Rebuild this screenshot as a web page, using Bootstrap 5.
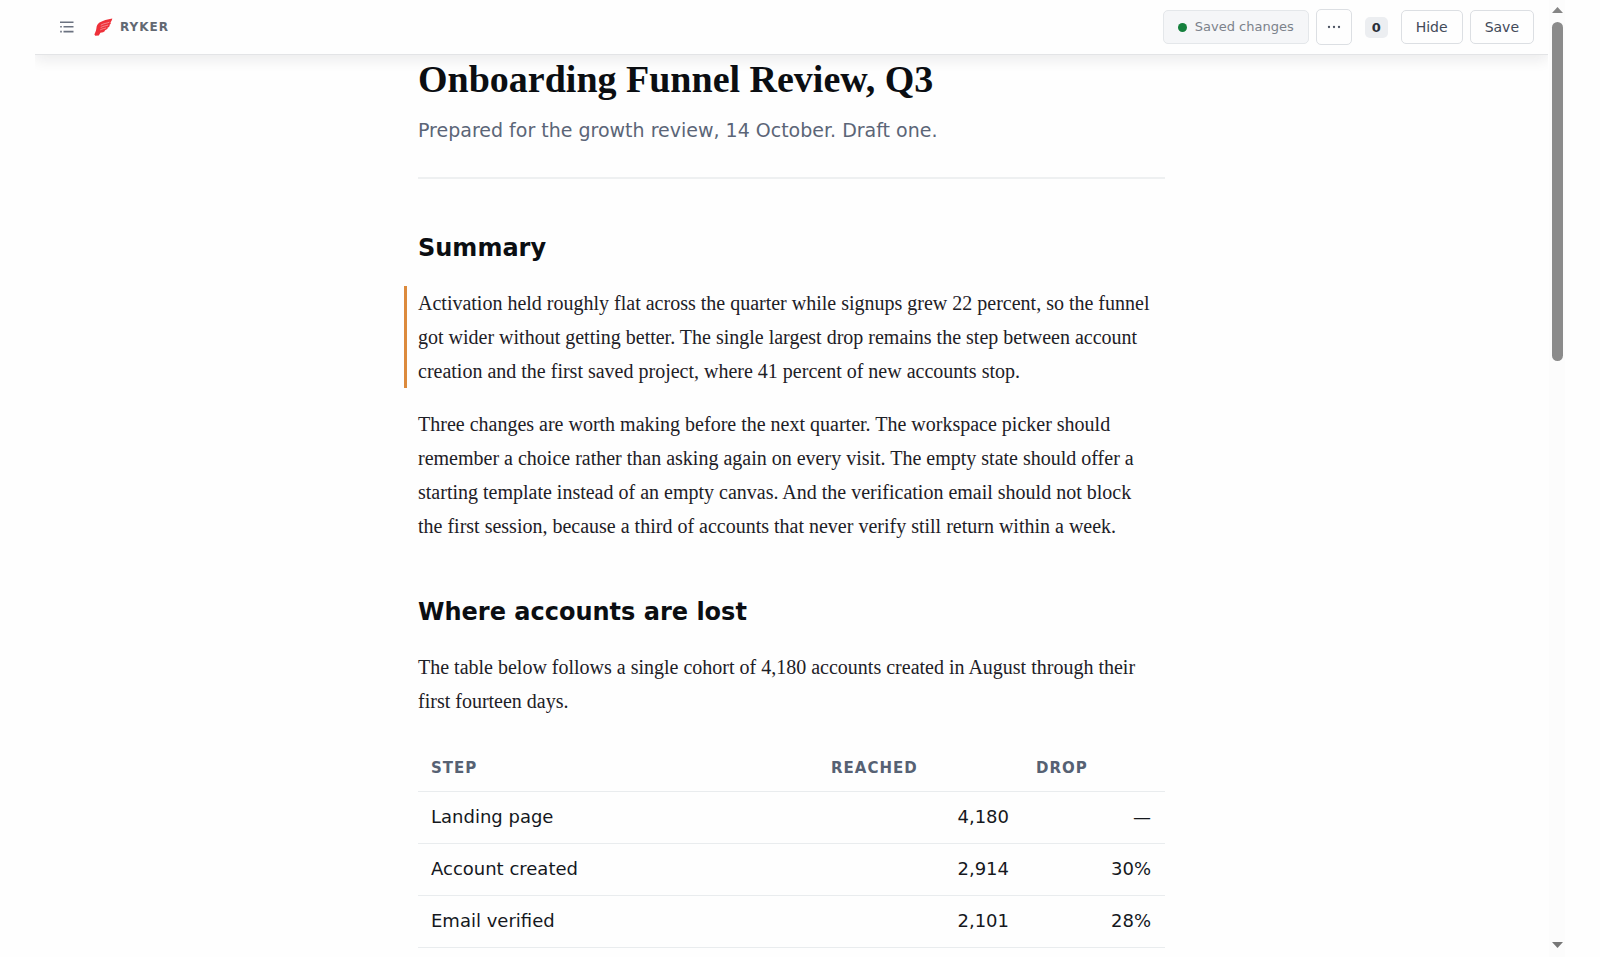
<!DOCTYPE html>
<html lang="en">
<head>
<meta charset="utf-8">
<meta name="viewport" content="width=device-width, initial-scale=1">
<title>Onboarding Funnel Review, Q3</title>
<link href="https://cdn.jsdelivr.net/npm/bootstrap@5.3.0/dist/css/bootstrap.min.css" rel="stylesheet">
<style>
  body { font-family: "DejaVu Sans", sans-serif; color: #0d1014; background: #fefefe; }
  .viewer { height: 100vh; padding: 0 35px; }

  .topbar { height: 55px; padding: 0 14px 0 25px; border-bottom: 1px solid #e3e4e6; background: #fefefe; box-shadow: 0 4px 14px rgba(20, 24, 30, .09); z-index: 2; }
  .outline-btn { line-height: 0; color: #6b7280; }
  .brand { gap: 7px; font-size: 12px; font-weight: 700; letter-spacing: 1px; color: #626872; }
  .brand:hover { color: #626872; }
  .tools { gap: 7px; }
  .tool { height: 34px; padding: 0 14px; font-size: 14px; line-height: 20px; color: #424a59; background: #fefefe; border: 1px solid #dcdfe3; border-radius: 5px; }
  .tool-more { width: 36px; height: 36px; padding: 0; line-height: 0; }
  .tool-status { font-size: 13px; }
  .tool-status:disabled { opacity: 1; color: #7c828b; background: #f5f6f8; border-color: #e4e7ea; }
  .status-dot { width: 9px; height: 9px; background: #15803d; }
  .counter { min-width: 23px; height: 21px; margin: 0 6px; padding: 0; font-size: 13px; line-height: 21px; color: #2a303a; background: #eceef1; border-radius: 5px; }

  .article { max-width: 747px; padding-top: 2px; }
  .article h1 { margin: 0; font: 700 38px/44px "Liberation Serif", serif; color: #0b0e12; }
  .article header { padding-bottom: 33px; border-bottom: 2px solid #eef0f1; }
  .subtitle { margin: 15px 0 0; font-size: 19px; line-height: 28px; color: #5b6577; }
  .article section { margin-top: 53px; }
  .article h2 { margin: 0 0 22px; font-size: 24px; line-height: 32px; font-weight: 700; color: #0b0e12; }
  .article section p { margin: 0 0 19px; padding-right: 10px; font: 20px/34px "Liberation Serif", serif; color: #1d2026; }
  .article section p:last-of-type { margin-bottom: 0; }
  .edited { box-shadow: -11px 0 0 #fefefe, -14px 0 0 #dc8a3c; }

  .funnel { margin: 24px 0 0; font-size: 18px; line-height: 24px; --bs-table-bg: transparent; --bs-table-color: #15181d; border-color: #e9ecee; }
  .funnel th, .funnel td { height: 52px; padding: 0 14px 0 13px; vertical-align: middle; }
  .funnel th { height: 49px; padding-top: 3px; font-size: 15px; letter-spacing: 1px; color: #566173; text-transform: uppercase; }
  .col-reached { width: 205px; }
  .col-drop { width: 142px; }

  .rail { width: 16px; margin-left: 1px; padding: 7px 0 9px; gap: 9px; background: #fcfcfc; }
  .rail-thumb { width: 11px; height: 36%; background: #8b8b8b; }
</style>
</head>
<body>
<div class="viewer d-flex overflow-hidden">
  <div class="flex-grow-1 d-flex flex-column overflow-hidden">
    <nav class="topbar d-flex align-items-center justify-content-between flex-shrink-0 position-relative" aria-label="Document">
      <div class="d-flex align-items-center gap-3">
        <button type="button" class="btn outline-btn border-0 p-0 me-1" aria-label="Outline">
          <svg width="14" height="12" viewBox="0 0 14 12" fill="none" stroke="currentColor" stroke-width="1.6"><path d="M0 1.2h13.5M3.5 5.8h10M3.5 10.6h10M.2 5.8h1.6M.2 10.6h1.6"/></svg>
        </button>
        <a href="#" class="brand d-flex align-items-center text-decoration-none">
          <svg width="19" height="20" viewBox="0 0 19 20" aria-hidden="true"><path fill="#ee3039" d="M18.300 1.400C13.500 2.200 9 3.200 5.500 5.600 3.400 7.200 2.600 9 2.400 11.200L2 13.600.4 17.600 1.300 18.800 4.800 18.600 6.400 15.800C8.400 15.600 10 15 11.300 13.800l-.8-.4c1.500-.4 2.700-1.100 3.500-2.300l-.8-.3c1.300-.5 2.200-1.300 2.700-2.400l-.8-.3c1.100-.6 1.700-1.400 1.900-2.400l-.7-.3c1-1 1.700-2.300 2-4Z"/><path d="M15.400 5.200c-3 1.300-5.500 1-8.600 3M14.200 8c-2.500 1-4.500.8-7.600 2.600M12.200 10.900c-2 .8-3.600.6-6 2" fill="none" stroke="#fff" stroke-opacity=".6" stroke-width=".7"/></svg>
          <span>RYKER</span>
        </a>
      </div>
      <div class="tools d-flex align-items-center">
        <button type="button" class="btn tool tool-status d-flex align-items-center gap-2" disabled><span class="status-dot rounded-circle"></span>Saved changes</button>
        <button type="button" class="btn tool tool-more" aria-label="More actions">
          <svg width="14" height="4" viewBox="0 0 14 4" fill="#4b5261"><circle cx="2" cy="2" r="1.150"/><circle cx="7" cy="2" r="1.150"/><circle cx="12" cy="2" r="1.150"/></svg>
        </button>
        <span class="badge counter">0</span>
        <button type="button" class="btn tool">Hide</button>
        <button type="button" class="btn tool">Save</button>
      </div>
    </nav>

    <main class="flex-grow-1 overflow-hidden">
      <article class="article mx-auto">
        <header>
          <h1>Onboarding Funnel Review, Q3</h1>
          <p class="subtitle">Prepared for the growth review, 14 October. Draft one.</p>
        </header>
        <section>
          <h2>Summary</h2>
          <p class="edited">Activation held roughly flat across the quarter while signups grew 22 percent, so the funnel got wider without getting better. The single largest drop remains the step between account creation and the first saved project, where 41 percent of new accounts stop.</p>
          <p>Three changes are worth making before the next quarter. The workspace picker should remember a choice rather than asking again on every visit. The empty state should offer a starting template instead of an empty canvas. And the verification email should not block the first session, because a third of accounts that never verify still return within a week.</p>
        </section>
        <section>
          <h2>Where accounts are lost</h2>
          <p>The table below follows a single cohort of 4,180 accounts created in August through their first fourteen days.</p>
          <table class="table funnel">
            <colgroup><col><col class="col-reached"><col class="col-drop"></colgroup>
            <thead><tr><th scope="col">Step</th><th scope="col">Reached</th><th scope="col">Drop</th></tr></thead>
            <tbody>
              <tr><td>Landing page</td><td class="text-end">4,180</td><td class="text-end">—</td></tr>
              <tr><td>Account created</td><td class="text-end">2,914</td><td class="text-end">30%</td></tr>
              <tr><td>Email verified</td><td class="text-end">2,101</td><td class="text-end">28%</td></tr>
            </tbody>
          </table>
        </section>
      </article>
    </main>
  </div>

  <div class="rail d-flex flex-column align-items-center flex-shrink-0" aria-hidden="true">
    <svg class="flex-shrink-0" width="11" height="6" viewBox="0 0 11 6"><path d="M0 6 5.500 0 11 6Z" fill="#858585"/></svg>
    <div class="rail-thumb rounded-pill"></div>
    <svg class="flex-shrink-0 mt-auto" width="11" height="6" viewBox="0 0 11 6"><path d="M0 0 5.500 6 11 0Z" fill="#777"/></svg>
  </div>
</div>
<script src="https://cdn.jsdelivr.net/npm/bootstrap@5.3.0/dist/js/bootstrap.bundle.min.js"></script>
</body>
</html>
